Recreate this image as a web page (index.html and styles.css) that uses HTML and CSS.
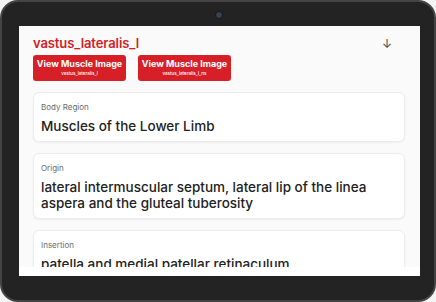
FILE: index.html
```html
<!DOCTYPE html>
<html lang="en">
<head>
<meta charset="UTF-8">
<title>vastus_lateralis_l</title>
<link rel="stylesheet" href="styles.css">
</head>
<body>
<div class="tablet">
  <div class="bezel-top"><span class="camera"></span></div>
  <div class="screen">
    <div class="scroll">
      <div class="header">
        <h1 class="title">vastus_lateralis_l</h1>
        <span class="download">↓</span>
      </div>
      <div class="actions">
        <button class="img-btn">View Muscle Image<small>vastus_lateralis_l</small></button>
        <button class="img-btn">View Muscle Image<small>vastus_lateralis_l_ns</small></button>
      </div>
      <div class="card">
        <div class="label">Body Region</div>
        <div class="value">Muscles of the Lower Limb</div>
      </div>
      <div class="card">
        <div class="label">Origin</div>
        <div class="value">lateral intermuscular septum, lateral lip of the linea aspera and the gluteal tuberosity</div>
      </div>
      <div class="card">
        <div class="label">Insertion</div>
        <div class="value">patella and medial patellar retinaculum</div>
      </div>
    </div>
    <div class="screen-foot"></div>
  </div>
</div>
</body>
</html>
```

FILE: styles.css
```css
body {
  margin: 0;
  background: #f4f4f4;
  font-family: Inter, "Open Sans", sans-serif;
}

.tablet {
  width: 436px;
  height: 302px;
  box-sizing: border-box;
  background: #232323;
  border: 2px solid #444;
  border-radius: 18px;
  padding: 0 14px 0 17px;
  display: flex;
  flex-direction: column;
}

.bezel-top {
  height: 24px;
  display: flex;
  justify-content: center;
  align-items: center;
}

.camera {
  width: 6px;
  height: 6px;
  border-radius: 50%;
  background: #3a4150;
  border: 1px solid #15171c;
  margin: 2px 2px 0 0;
}

.screen {
  width: 401px;
  height: 250px;
  background: #fafafa;
  display: flex;
  flex-direction: column;
}

.scroll {
  flex: 1;
  overflow: hidden;
  padding: 0 15px 0 14px;
}

.screen-foot {
  height: 9px;
  background: #fff;
}

.header {
  display: flex;
  justify-content: space-between;
  align-items: center;
  padding: 5px 12px 0 0;
  height: 24px;
}

.title {
  margin: 0;
  color: #d01f27;
  font-size: 13px;
  font-weight: 600;
  letter-spacing: -0.1px;
}

.download {
  color: #444;
  font-size: 12px;
  font-weight: 400;
  margin-right: 1px;
}

.actions {
  display: flex;
  gap: 12px;
  margin-bottom: 11px;
}

.img-btn {
  width: 93px;
  height: 26px;
  border: none;
  border-radius: 3px;
  background: #d61f26;
  color: #fff;
  font-family: inherit;
  font-size: 9px;
  font-weight: 700;
  padding: 3px 0 0;
  display: flex;
  flex-direction: column;
  align-items: center;
  line-height: 12px;
}

.img-btn small {
  font-size: 4.5px;
  font-weight: 500;
  line-height: 7px;
}

.card {
  background: #fff;
  border: 1px solid #ececec;
  border-radius: 6px;
  box-shadow: 0 1px 2px rgba(0,0,0,0.05);
  padding: 7px 7px;
  margin-bottom: 11px;
}

.label {
  color: #6a6a6a;
  font-size: 8px;
  line-height: 14px;
}

.value {
  color: #222;
  font-size: 13.5px;
  font-weight: 500;
  line-height: 16px;
  margin-top: 4px;
}
```
